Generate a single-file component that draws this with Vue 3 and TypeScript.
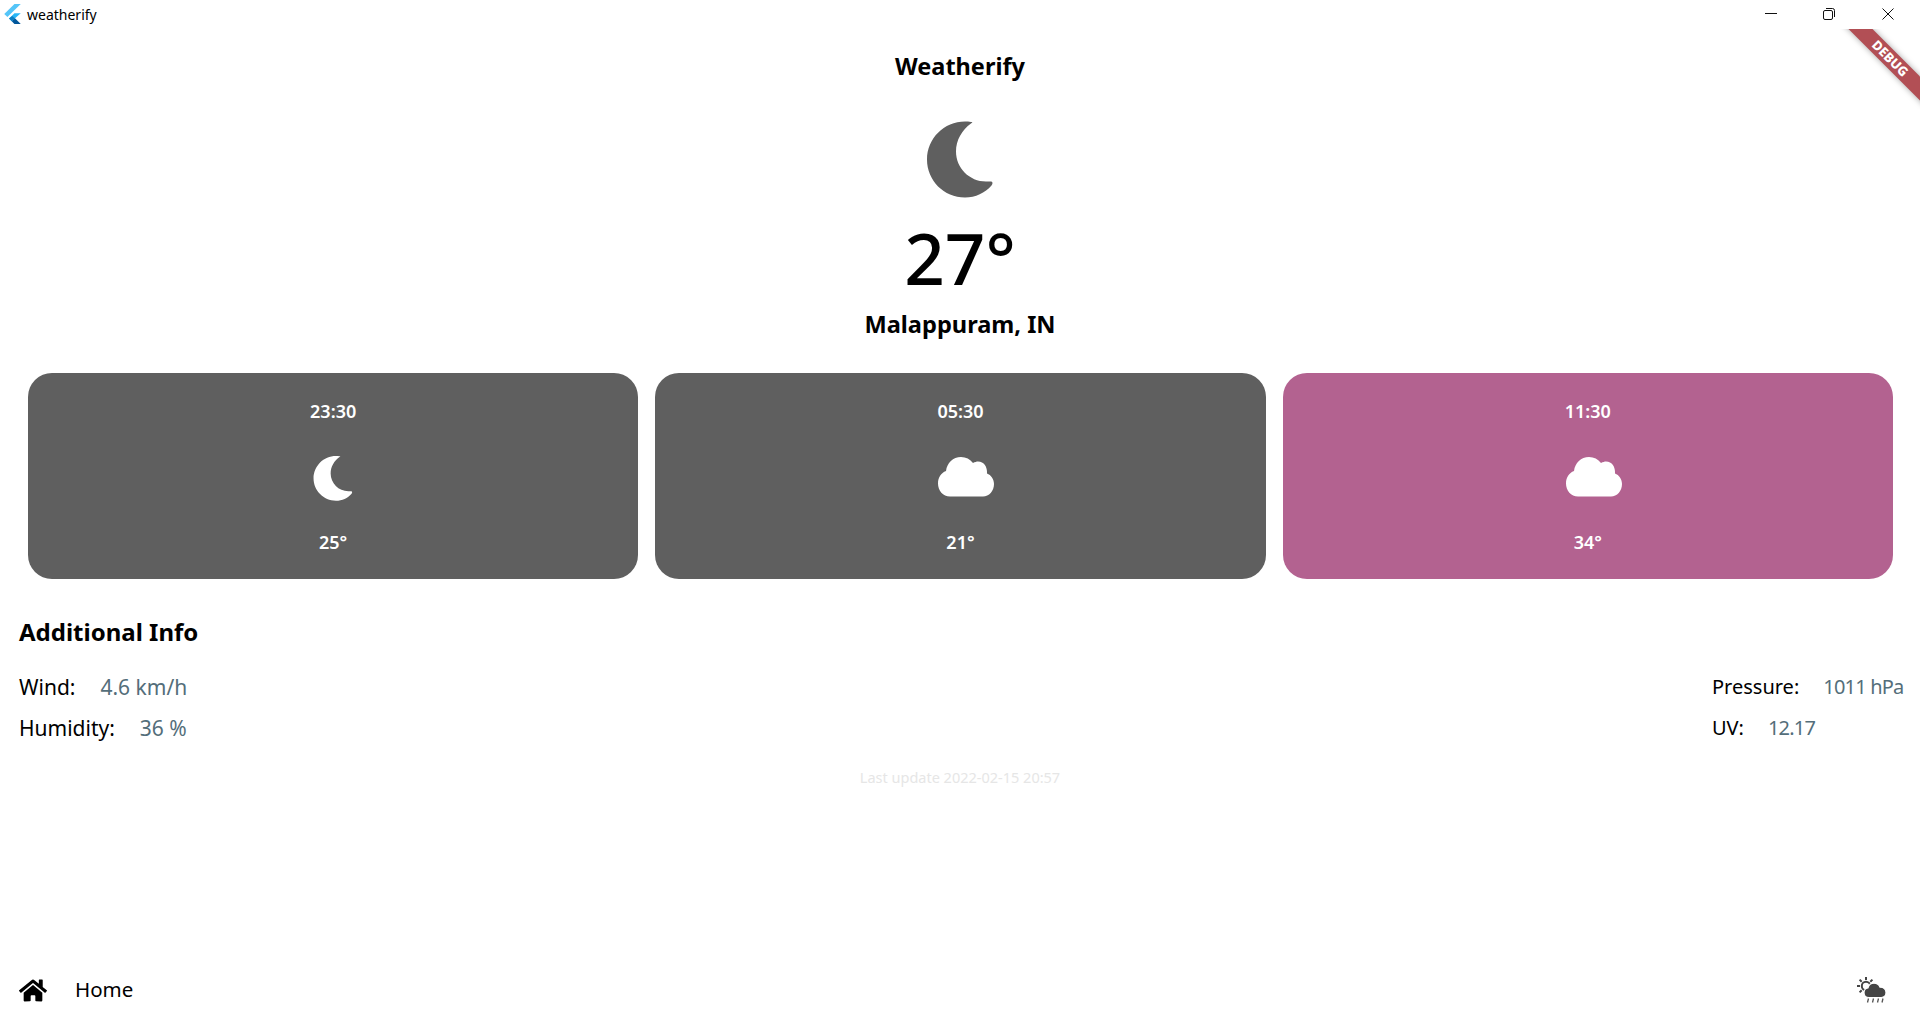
<template>
  <div class="window">
    <header class="title-bar">
      <div class="app-name">
        <svg class="flutter-logo" viewBox="2 0 20 24" preserveAspectRatio="none">
          <path fill="#54c5f8" d="M14.3 0 2.3 12 6 15.7 21.7 0z" />
          <path fill="#29b6f6" d="M14.3 11.1 7.900 17.500l3.200 3.200 10.600-9.600z" />
          <path fill="#01579b" d="M11.100 20.700 14.300 24h7.400l-6.500-6.500-2 1z" />
          <path fill="#0d7fc4" d="M7.900 17.500l3.700-3.100 3.600 3.100-4.100 3.200z" />
        </svg>
        <span>weatherify</span>
      </div>
      <div class="window-controls">
        <svg viewBox="0 0 12 12"><path d="M0 5.500h12" /></svg>
        <svg viewBox="0 0 12 12"><rect x=".5" y="2.500" width="9" height="9" rx="1.500" /><path d="M3 .5h6.500a2 2 0 0 1 2 2V9" /></svg>
        <svg class="close-icon" viewBox="0 0 12 12"><path d="M.5.5l11 11M11.500.5l-11 11" /></svg>
      </div>
    </header>

    <div class="debug-corner"><div class="debug-ribbon">DEBUG</div></div>

    <main class="content">
      <h1 class="app-title">Weatherify</h1>
      <svg class="hero-moon" viewBox="0 0 70 78"><path :d="moonPath" /></svg>
      <div class="hero-temp">27°</div>
      <h2 class="location">Malappuram, IN</h2>

      <section class="forecast">
        <article
          v-for="item in forecast"
          :key="item.time"
          class="forecast-card"
          :class="{ current: item.current }"
        >
          <div class="card-text">{{ item.time }}</div>
          <div class="card-icon">
            <svg v-if="item.icon === 'moon'" class="small-moon" viewBox="0 0 70 78"><path :d="moonPath" /></svg>
            <svg v-else class="cloud" viewBox="0 0 56 40"><path :d="cloudPath" /></svg>
          </div>
          <div class="card-text">{{ item.temp }}</div>
        </article>
      </section>

      <h2 class="info-title">Additional Info</h2>
      <section class="info-grid">
        <div class="info-col">
          <div v-for="row in leftInfo" :key="row.label" class="info-row">
            <span>{{ row.label }}</span>
            <span class="info-value">{{ row.value }}</span>
          </div>
        </div>
        <div class="info-col right">
          <div v-for="row in rightInfo" :key="row.label" class="info-row">
            <span>{{ row.label }}</span>
            <span class="info-value">{{ row.value }}</span>
          </div>
        </div>
      </section>

      <p class="last-update">Last update 2022-02-15 20:57</p>
    </main>

    <footer class="bottom-nav">
      <div class="nav-home">
        <svg class="home-icon" viewBox="0 0 576 512">
          <path d="M280.37 148.26L96 300.11V464a16 16 0 0 0 16 16l112.06-.29a16 16 0 0 0 15.92-16V368a16 16 0 0 1 16-16h64a16 16 0 0 1 16 16v95.64a16 16 0 0 0 16 16.05L464 480a16 16 0 0 0 16-16V300L295.67 148.26a12.19 12.19 0 0 0-15.3 0zM571.6 251.47L488 182.56V44.05a12 12 0 0 0-12-12h-56a12 12 0 0 0-12 12v72.61L318.47 43a48 48 0 0 0-61 0L4.34 251.47a12 12 0 0 0-1.6 16.9l25.5 31A12 12 0 0 0 45.15 301l235.22-193.74a12.19 12.19 0 0 1 15.3 0L530.9 301a12 12 0 0 0 16.9-1.6l25.5-31a12 12 0 0 0-1.7-16.93z" />
        </svg>
        <span class="home-label">Home</span>
      </div>
      <svg class="forecast-icon" viewBox="0 0 29 26">
        <g class="sun-rays">
          <path d="M9 0v3M9 15v3M0 9h3M15 9h3M2.600 2.600l2.100 2.100M13.300 13.300l2.100 2.100M2.600 15.400l2.100-2.100M15.400 2.600l-2.100 2.100" />
          <circle cx="9" cy="9" r="4.200" />
        </g>
        <path class="cloud-shape" d="M12 20.500c-3 0-5-2-5-4.800 0-2.400 1.600-4.300 3.900-4.700C11.700 8.200 14 6.200 17 6.200c2.800 0 5.100 1.600 6 4 3.500-.2 6 2.200 6 5.300 0 2.700-2 5-4.800 5z" />
        <path class="rain" d="M11.500 21.500l-1 4M16.500 21.500l-1 4M21.500 21.500l-1 4M26 21.500l-1 4" />
      </svg>
    </footer>
  </div>
</template>

<script setup lang="ts">
interface ForecastItem {
  time: string
  temp: string
  icon: 'moon' | 'cloud'
  current?: boolean
}

const moonPath = 'M46 3.500C47.500 2.500 48 2 46 2 44 1.500 42 1.500 40 1.500 19 1.500 2 18.500 2 39.500S19 77.500 40 77.500C50.500 77.500 60 73 66.500 65.500 68 63.500 68 61 65 61.500 64 61.500 62 61.500 61 61.500 44.500 61.500 31 48 31 31.500 31 20 37 10 46 3.500Z'

const cloudPath = 'M12 39.500C5 39.500 0 33.500 0 26.500 0 20.500 3 16 8 14 9 6 15 0 23 0 28 0 32 2 35 6 37 5 38.500 4.500 40 4.500 46 4.500 49.500 10 49 16.500 53 18 56 22 56 27 56 34 51 39.500 45 39.500Z'

const forecast: ForecastItem[] = [
  { time: '23:30', temp: '25°', icon: 'moon' },
  { time: '05:30', temp: '21°', icon: 'cloud' },
  { time: '11:30', temp: '34°', icon: 'cloud', current: true }
]

const leftInfo = [
  { label: 'Wind:', value: '4.6 km/h' },
  { label: 'Humidity:', value: '36 %' }
]

const rightInfo = [
  { label: 'Pressure:', value: '1011 hPa' },
  { label: 'UV:', value: '12.17' }
]
</script>

<style>
html,
body {
  margin: 0;
  background: #fff;
}
</style>

<style scoped>
.window {
  position: relative;
  height: 1016px;
  overflow: hidden;
  display: flex;
  flex-direction: column;
  background: #fff;
  color: #000;
  font-family: "Noto Sans", "Open Sans", sans-serif;
}

.title-bar {
  height: 29px;
  flex: none;
  display: flex;
  justify-content: space-between;
  align-items: flex-start;
}

.app-name {
  display: flex;
  align-items: center;
  gap: 6px;
  padding: 4px 0 0 4px;
  height: 20px;
  font-size: 14px;
}

.flutter-logo {
  width: 17px;
  height: 20px;
}

.window-controls {
  display: flex;
  gap: 46px;
  padding: 8px 26px 0 0;
}

.window-controls svg {
  width: 12px;
  height: 12px;
  fill: none;
  stroke: #111;
  stroke-width: 1;
}

.window-controls .close-icon {
  margin-left: 1px;
}

.debug-corner {
  position: absolute;
  top: 29px;
  right: 0;
  width: 80px;
  height: 80px;
  overflow: hidden;
}

.debug-ribbon {
  position: absolute;
  left: -20px;
  top: 21px;
  width: 140px;
  height: 17px;
  line-height: 17px;
  transform: rotate(45deg);
  background: #b24f55;
  box-shadow: 0 0 6px rgba(0, 0, 0, 0.35);
  color: #fff;
  font-size: 13px;
  font-weight: 800;
  text-align: center;
}

.content {
  flex: 1;
  display: flex;
  flex-direction: column;
  align-items: center;
}

.app-title {
  margin: 21px 0 0;
  font-size: 23.5px;
  line-height: 32px;
  font-weight: 700;
}

.hero-moon {
  width: 70px;
  height: 78px;
  margin-top: 38px;
  fill: #5f5f5f;
}

.hero-temp {
  margin-top: 20px;
  font-size: 71px;
  line-height: 80px;
  font-weight: 500;
}

.location {
  margin: 10px 0 0;
  font-size: 23.6px;
  line-height: 32px;
  font-weight: 700;
}

.forecast {
  align-self: stretch;
  display: grid;
  grid-template-columns: repeat(3, 1fr);
  gap: 17px;
  margin: 33px 27px 0 28px;
}

.forecast-card {
  height: 206px;
  box-sizing: border-box;
  padding-top: 26px;
  border-radius: 24px;
  background: #5f5f5f;
  color: #fff;
  display: flex;
  flex-direction: column;
  align-items: center;
}

.forecast-card.current {
  background: #b36290;
}

.card-text {
  font-size: 18px;
  line-height: 24px;
  font-weight: 600;
}

.card-icon {
  height: 48px;
  margin: 30px 0 29px;
  display: flex;
  align-items: center;
  justify-content: center;
  fill: #fff;
}

.small-moon {
  width: 42px;
  height: 46px;
  margin-top: 2px;
}

.cloud {
  width: 56px;
  height: 40px;
  margin-left: 12px;
}

.info-title {
  align-self: stretch;
  margin: 37px 0 0;
  padding-left: 19px;
  font-size: 24px;
  line-height: 32px;
  font-weight: 700;
}

.info-grid {
  align-self: stretch;
  display: flex;
  justify-content: space-between;
  margin-top: 19px;
  padding: 0 19px;
}

.info-col {
  min-width: 189px;
  display: flex;
  flex-direction: column;
  gap: 1px;
}

.info-col.right {
  width: 189px;
}

.info-row {
  display: flex;
  gap: 25px;
  font-size: 21px;
  line-height: 40px;
}

.info-col.right .info-row {
  gap: 24px;
  font-size: 20px;
  white-space: nowrap;
}

.info-col.right .info-value {
  letter-spacing: -0.8px;
}

.info-value {
  color: #546e7a;
}

.last-update {
  margin: 19px 0 0;
  font-size: 14.5px;
  line-height: 20px;
  color: #e6e6e6;
}

.bottom-nav {
  height: 52px;
  flex: none;
  display: flex;
  justify-content: space-between;
  align-items: center;
  padding: 0 34px 0 19px;
}

.nav-home {
  display: flex;
  align-items: center;
  gap: 28px;
  font-size: 20.5px;
}

.home-label {
  padding-bottom: 2px;
}

.home-icon {
  width: 28px;
  height: 25px;
  fill: #000;
}

.forecast-icon {
  width: 29px;
  height: 26px;
}

.sun-rays {
  fill: none;
  stroke: #444;
  stroke-width: 2;
}

.cloud-shape {
  fill: #444;
  stroke: #fff;
  stroke-width: 1.2;
}

.rain {
  fill: none;
  stroke: #555;
  stroke-width: 1.3;
}
</style>
